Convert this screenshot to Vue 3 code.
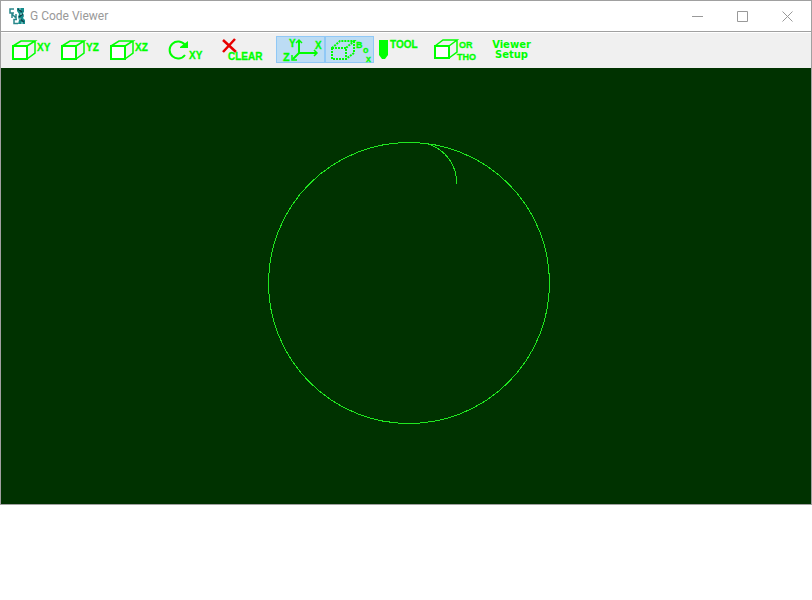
<script setup>
import { ref } from 'vue'

const axesOn = ref(true)
const boxOn = ref(true)
const planes = ['XY', 'YZ', 'XZ']
</script>

<template>
  <main class="window">
    <header class="titlebar">
      <svg class="logo" viewBox="0 0 18 18" aria-hidden="true">
        <path class="teal" d="M9 1h7v4l-1 1 1 3-1 2 2 2v4h-7l1-4-1-3 1-3-2-3z" />
        <path class="dark" d="M10 2l4 3M15 7l-4 3M12 12l4 3" />
        <path class="gaps" d="M12 1v2M13 6v2M12 11v2M14 15v2" />
        <path class="cnc" d="M6 2H2v4h4M4 11V7l4 4V7M9 12.500H6v4h4" />
      </svg>
      <h1>G Code Viewer</h1>
      <div class="controls">
        <button type="button" aria-label="Minimize">
          <svg viewBox="0 0 11 11"><path d="M0 5.5h11" /></svg>
        </button>
        <button type="button" aria-label="Maximize">
          <svg viewBox="0 0 11 11"><path d="M.5.5h10v10H.5z" /></svg>
        </button>
        <button type="button" aria-label="Close">
          <svg viewBox="0 0 11 11"><path d="M.5.5l10 10M10.5.5l-10 10" /></svg>
        </button>
      </div>
    </header>

    <nav class="toolbar" aria-label="View tools">
      <div class="group">
        <button v-for="plane in planes" :key="plane" type="button" class="tool">
          <svg viewBox="0 0 49 27">
            <path class="face" d="M6 10h14v13H6z" />
            <path class="line" d="M6 10l8-5h14l-8 5M28 5v12l-8 6" />
            <text x="30" y="15">{{ plane }}</text>
          </svg>
        </button>
      </div>
      <div class="group">
        <button type="button" class="tool">
          <svg viewBox="0 0 49 27">
            <path class="line thick" d="M25 9a8.500 8.500 0 1 0 0 10" />
            <path class="solid" d="M28 5v7h-8v-1z" />
            <text x="29" y="23">XY</text>
          </svg>
        </button>
      </div>
      <div class="group">
        <button type="button" class="tool">
          <svg viewBox="0 0 49 27">
            <path class="cross" d="M8 4l13 12M20 3L8 16" />
            <text x="13" y="24">CLEAR</text>
          </svg>
        </button>
      </div>
      <div class="group toggles">
        <button type="button" class="tool" :class="{ on: axesOn }" :aria-pressed="axesOn" @click="axesOn = !axesOn">
          <svg viewBox="0 0 49 27">
            <path class="line thick" d="M23 4v13h18M23 17l-6 6" />
            <path class="line" d="M20 7l3-3 3 3M38 14l3 3-3 3M16 19v5h5" />
            <text x="13" y="11">Y</text>
            <text x="39" y="13">X</text>
            <text x="7" y="25" class="large">Z</text>
          </svg>
        </button>
        <button type="button" class="tool" :class="{ on: boxOn }" :aria-pressed="boxOn" @click="boxOn = !boxOn">
          <svg viewBox="0 0 49 27">
            <path class="line thick dotted" d="M7 12h14v11H7zM7 12l8-7h14l-8 7M29 5v12l-8 6" />
            <text x="31" y="12" class="small">B</text>
            <text x="38" y="17" class="small">o</text>
            <text x="41" y="26" class="small">x</text>
          </svg>
        </button>
        <button type="button" class="tool">
          <svg viewBox="0 0 49 27">
            <path class="solid" d="M5 4h9v15l-3 4H8l-3-4z" />
            <text x="16" y="12">TOOL</text>
          </svg>
        </button>
      </div>
      <div class="group">
        <button type="button" class="tool">
          <svg viewBox="0 0 49 27">
            <path class="face" d="M6 10h14v12H6z" />
            <path class="line" d="M6 10l8-6h14l-8 6M28 4v12l-8 6" />
            <text x="30" y="12" class="small">OR</text>
            <text x="28" y="24" class="small">THO</text>
          </svg>
        </button>
      </div>
      <div class="group">
        <button type="button" class="tool label">Viewer<br />Setup</button>
      </div>
    </nav>

    <svg class="scene" viewBox="0 0 810 436" role="img" aria-label="Tool path">
      <circle cx="408" cy="215" r="140.5" />
      <path d="M427 76A40 40 0 0 1 455.500 116" />
    </svg>
  </main>
</template>

<style>
body {
  margin: 0;
  background: #fff;
}
</style>

<style scoped>
.window {
  border: 1px solid #a0a0a0;
  font-family: Roboto, "Noto Sans", sans-serif;
}
.titlebar {
  display: flex;
  align-items: center;
  height: 30px;
  padding-left: 7px;
  background: #fff;
  border-bottom: 1px solid #a0a0a0;
}
.logo {
  width: 18px;
  height: 18px;
}
.teal { fill: #168c8c; }
.dark { stroke: #123f48; stroke-width: 1.5; }
.gaps { stroke: #a8dcdc; }
.cnc { fill: none; stroke: #28868a; stroke-width: 1.5; }
h1 {
  flex: 1;
  margin: 0 0 0 4px;
  font-size: 12px;
  font-weight: 400;
  line-height: 16px;
  color: #999;
}
.controls {
  display: flex;
  padding-right: 1px;
}
.controls button {
  display: flex;
  align-items: center;
  justify-content: center;
  width: 45px;
  height: 28px;
  padding: 0;
  border: 0;
  background: none;
}
.controls svg {
  width: 11px;
  height: 11px;
  fill: none;
  stroke: #999;
}
.toolbar {
  display: flex;
  gap: 6px;
  padding: 3px 6px 5px;
  background: #f0f0f0;
  border-top: 1px solid #fff;
}
.group {
  display: flex;
}
.toggles {
  margin-left: 6px;
}
.tool {
  width: 49px;
  height: 27px;
  padding: 0;
  border: 0;
  background: none;
}
.tool.on {
  background: #bcdcf4;
  box-shadow: inset 0 0 0 1px #90c8f6;
}
.tool svg {
  display: block;
  width: 49px;
  height: 27px;
}
.tool text {
  font: bold 10px "Liberation Sans", sans-serif;
  fill: #0f0;
  stroke: #0f0;
  stroke-width: 0.3;
}
.tool text.small {
  font-size: 9px;
}
.tool text.large {
  font-size: 11px;
}
.tool.label {
  padding-left: 6px;
  font: bold 10px/10px "DejaVu Sans", sans-serif;
  color: #0f0;
}
.face { fill: #fff; stroke: #0f0; stroke-width: 2; }
.line { fill: none; stroke: #0f0; stroke-width: 1.5; }
.thick { stroke-width: 2; }
.dotted { stroke-dasharray: 2 1; }
.solid { fill: #0f0; }
.cross { stroke: #e80000; stroke-width: 2.5; }
.scene {
  display: block;
  width: 100%;
  height: auto;
  background: #003200;
  fill: none;
  stroke: #20e820;
  shape-rendering: crispEdges;
}
</style>
